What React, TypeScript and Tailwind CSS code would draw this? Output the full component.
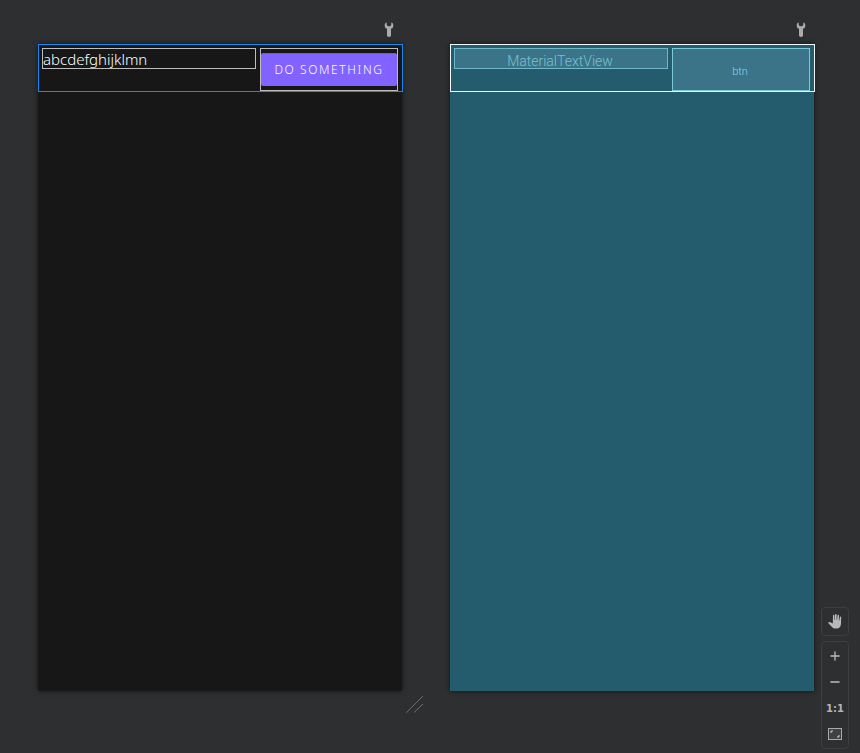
import { Minus, Plus } from 'lucide-react';

function Wrench() {
  return (
    <svg width="10" height="15" viewBox="0 0 10 15" fill="#ababab">
      <path d="M2.6 0.2 L2.8 3 Q3 4.2 5 4.2 Q7 4.2 7.2 3 L7.4 0.2 Q9.4 1.2 9.4 3.4 Q9.4 5.8 7 6.8 L7 13.6 Q7 15 5 15 Q3 15 3 13.6 L3 6.8 Q0.6 5.8 0.6 3.4 Q0.6 1.2 2.6 0.2 Z" />
    </svg>
  );
}

function HandIcon() {
  return (
    <svg width="15" height="15" viewBox="0 0 15 15" fill="#b9b9b9">
      <path d="M5 1.5 Q5 0.7 5.7 0.7 Q6.4 0.7 6.4 1.5 L6.6 6 L7 6 L7 0.8 Q7 0 7.8 0 Q8.6 0 8.6 0.8 L8.7 6 L9.1 6 L9.5 1.4 Q9.6 0.7 10.3 0.7 Q11 0.7 11 1.4 L10.9 6.4 L11.3 6.4 L11.9 3.2 Q12 2.6 12.6 2.6 Q13.2 2.6 13.2 3.2 L13 9.5 Q12.8 14.5 8.6 14.5 L6.8 14.5 Q5.2 14.5 4 13 L0.4 9.2 Q0 8.6 0.6 8.2 Q1.4 7.6 2.4 8.2 L4.8 9.6 Z" />
    </svg>
  );
}

function FitIcon() {
  return (
    <svg width="14" height="12" viewBox="0 0 14 12" fill="none">
      <rect x="0.5" y="0.5" width="13" height="11" fill="#3f4143" stroke="#a9a9a9" />
      <path d="M3 5 V3 H5 M9 9 H11 V7" stroke="#d0d0d0" />
    </svg>
  );
}

function ResizeHandle() {
  return (
    <svg width="20" height="18" viewBox="0 0 20 18" fill="none" stroke="#8f8f8f" strokeDasharray="1 0.4">
      <path d="M0.5 17.5 L17 1" />
      <path d="M8 17.5 L17 9" />
    </svg>
  );
}

export default function App() {
  return (
    <div className="relative flex w-[860px] h-[753px] gap-[47px] pl-[38px] pt-[21px] bg-[#2d2f31] overflow-hidden" style={{ fontFamily: '"Noto Sans", sans-serif' }}>
      {/* design surface */}
      <div className="flex flex-col w-[365px]">
        <div className="flex justify-end h-[23px] pt-px pr-[9px]">
          <Wrench />
        </div>
        <div className="w-[364px] h-[647px] bg-[#171717] shadow-[0_0_5px_rgba(0,0,0,0.6)]">
          <div className="flex w-[365px] h-[48px] gap-[4px] pl-[3px] pt-[3px] pr-[4px] border border-[#1a86f0]">
            <div className="w-[214px] h-[21px] border border-[#bdbdbd] text-[15px] font-light leading-[20px] text-white whitespace-nowrap">
              abcdefghijklmn
            </div>
            <div className="w-[138px] h-[43px] border border-[#bdbdbd] pt-[4px]">
              <div className="h-[33px] rounded-[2px] border-t border-[#6f5adf] bg-[#8263ff] flex items-center justify-center text-[12px] font-light tracking-[1.6px] text-white">
                DO SOMETHING
              </div>
            </div>
          </div>
        </div>
      </div>

      {/* blueprint surface */}
      <div className="flex flex-col w-[365px]">
        <div className="flex justify-end h-[23px] pt-px pr-[9px]">
          <Wrench />
        </div>
        <div className="w-[364px] h-[647px] bg-[#245c6e] shadow-[0_0_5px_rgba(0,0,0,0.6)]">
          <div className="flex w-[365px] h-[48px] gap-[4px] pl-[3px] pt-[3px] pr-[4px] border border-[#f2f7f8]">
            <div className="w-[214px] h-[21px] border border-[#6fb8c9] bg-[#3b7488] pr-[2px] text-[14px] font-light leading-[24px] overflow-hidden text-center text-[#79c2d2]" style={{ fontFamily: 'Roboto, sans-serif' }}>
              MaterialTextView
            </div>
            <div className="w-[138px] h-[43px] border border-[#7cc9da] bg-[#3b7488] flex items-center justify-center pt-[5px] pr-[2px] text-[11px] font-light text-[#8fd2e0]" style={{ fontFamily: 'Roboto, sans-serif' }}>
              btn
            </div>
          </div>
        </div>
      </div>

      {/* resize handle */}
      <div className="absolute left-[406px] top-[695px]">
        <ResizeHandle />
      </div>

      {/* zoom toolbar */}
      <div className="absolute left-[821px] top-[607px] flex flex-col gap-[5px]">
        <div className="flex items-center justify-center w-[28px] h-[29px] rounded-[4px] border border-[#3c3e40]">
          <HandIcon />
        </div>
        <div className="flex flex-col items-center w-[28px] h-[108px] rounded-[4px] border border-[#3c3e40] pt-px">
          <div className="flex items-center justify-center h-[26px] text-[#bdbdbd]">
            <Plus size={14} strokeWidth={2.2} />
          </div>
          <div className="flex items-center justify-center h-[26px] text-[#bdbdbd]">
            <Minus size={14} strokeWidth={2.2} />
          </div>
          <div className="flex items-center justify-center h-[26px] text-[10px] font-bold text-[#b4b4b4]" style={{ fontFamily: '"DejaVu Sans", sans-serif' }}>
            1:1
          </div>
          <div className="flex items-center justify-center h-[26px]">
            <FitIcon />
          </div>
        </div>
      </div>
    </div>
  );
}
